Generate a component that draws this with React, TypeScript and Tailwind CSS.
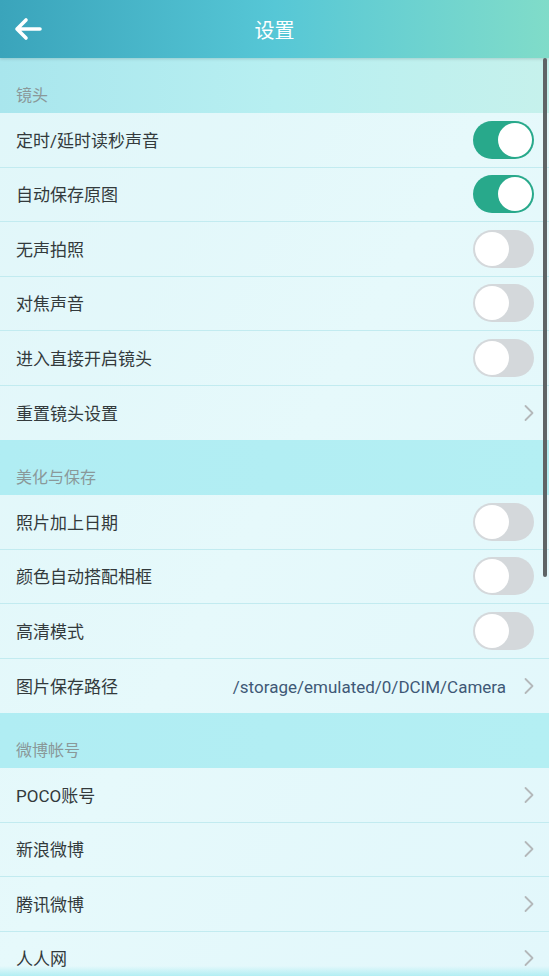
import React from "react";

const font = { fontFamily: '"Roboto", "Noto Sans CJK SC", sans-serif' };

function Toggle({ on }: { on: boolean }) {
  return (
    <div
      className={
        "flex h-[38px] w-[61px] items-center rounded-full p-[2px] " +
        (on ? "justify-end bg-[#28a98b]" : "justify-start bg-[#d4d8db]")
      }
    >
      <div className="h-[34px] w-[34px] rounded-full bg-white" />
    </div>
  );
}

function Chevron() {
  return (
    <svg width="12" height="20" viewBox="0 0 12 20" className="shrink-0">
      <path d="M2.5 3 L9.5 10 L2.5 17" fill="none" stroke="#b4b8ba" strokeWidth="1.8" strokeLinecap="round" strokeLinejoin="round" />
    </svg>
  );
}

function Section({ title, first }: { title: string; first?: boolean }) {
  return (
    <div
      className={
        "flex h-[55px] items-end pb-[5px] pl-[16px] text-[16px] text-[#8a9899] " +
        (first
          ? "bg-gradient-to-r from-[#a9e6ed] via-[#b7eff1] to-[#c6f1ec]"
          : "bg-gradient-to-r from-[#b0edf3] to-[#b4eff3]")
      }
    >
      {title}
    </div>
  );
}

type RowProps = { label: string; toggle?: boolean; on?: boolean; value?: string; last?: boolean };

function Row({ label, toggle, on, value, last }: RowProps) {
  return (
    <div
      className={
        "flex h-[54.5px] items-center justify-between pl-[16px] pr-[14px] " +
        (last ? "" : "border-b border-[#c2ebf0]")
      }
    >
      <span className="pt-[3px] text-[17px] text-[#333a3c]">{label}</span>
      {toggle ? (
        <div className="pr-[1px]">
          <Toggle on={!!on} />
        </div>
      ) : (
        <div className="flex items-center gap-[17px]">
          {value && <span className="pt-[3px] text-[17px] text-[#3f5876]">{value}</span>}
          <Chevron />
        </div>
      )}
    </div>
  );
}

export default function App() {
  return (
    <div className="relative h-[976px] w-[549px] overflow-hidden bg-gradient-to-br from-[#d9f5f8] via-[#e0f8fa] to-[#dbf6fa]" style={font}>
      <div className="relative flex h-[58px] items-center justify-center bg-gradient-to-r from-[#3aa4bb] via-[#56c7d6] to-[#80dcc9] shadow-[0_1px_3px_rgba(0,0,0,0.15)]">
        <div className="absolute left-[13px] top-[16px]">
          <svg width="30" height="26" viewBox="0 0 30 26">
            <path d="M27 13 H4 M13 4 L4 13 L13 22" fill="none" stroke="white" strokeWidth="3.6" strokeLinecap="round" strokeLinejoin="round" />
          </svg>
        </div>
        <span className="pt-[3px] text-[20px] text-white">设置</span>
      </div>

      <div className="flex flex-col">
        <Section title="镜头" first />
        <div className="bg-white/20">
          <Row label="定时/延时读秒声音" toggle on />
          <Row label="自动保存原图" toggle on />
          <Row label="无声拍照" toggle />
          <Row label="对焦声音" toggle />
          <Row label="进入直接开启镜头" toggle />
          <Row label="重置镜头设置" last />
        </div>
        <Section title="美化与保存" />
        <div className="bg-white/20">
          <Row label="照片加上日期" toggle />
          <Row label="颜色自动搭配相框" toggle />
          <Row label="高清模式" toggle />
          <Row label="图片保存路径" value="/storage/emulated/0/DCIM/Camera" last />
        </div>
        <Section title="微博帐号" />
        <div className="bg-white/20">
          <Row label="POCO账号" />
          <Row label="新浪微博" />
          <Row label="腾讯微博" />
          <Row label="人人网" />
        </div>
      </div>

      <div className="absolute left-[543px] top-[58px] h-[519px] w-[4px] rounded-full bg-[#5f6466]" />
      <div className="absolute bottom-0 left-0 h-[10px] w-full bg-gradient-to-b from-transparent to-[#b2eef3]" />
    </div>
  );
}
